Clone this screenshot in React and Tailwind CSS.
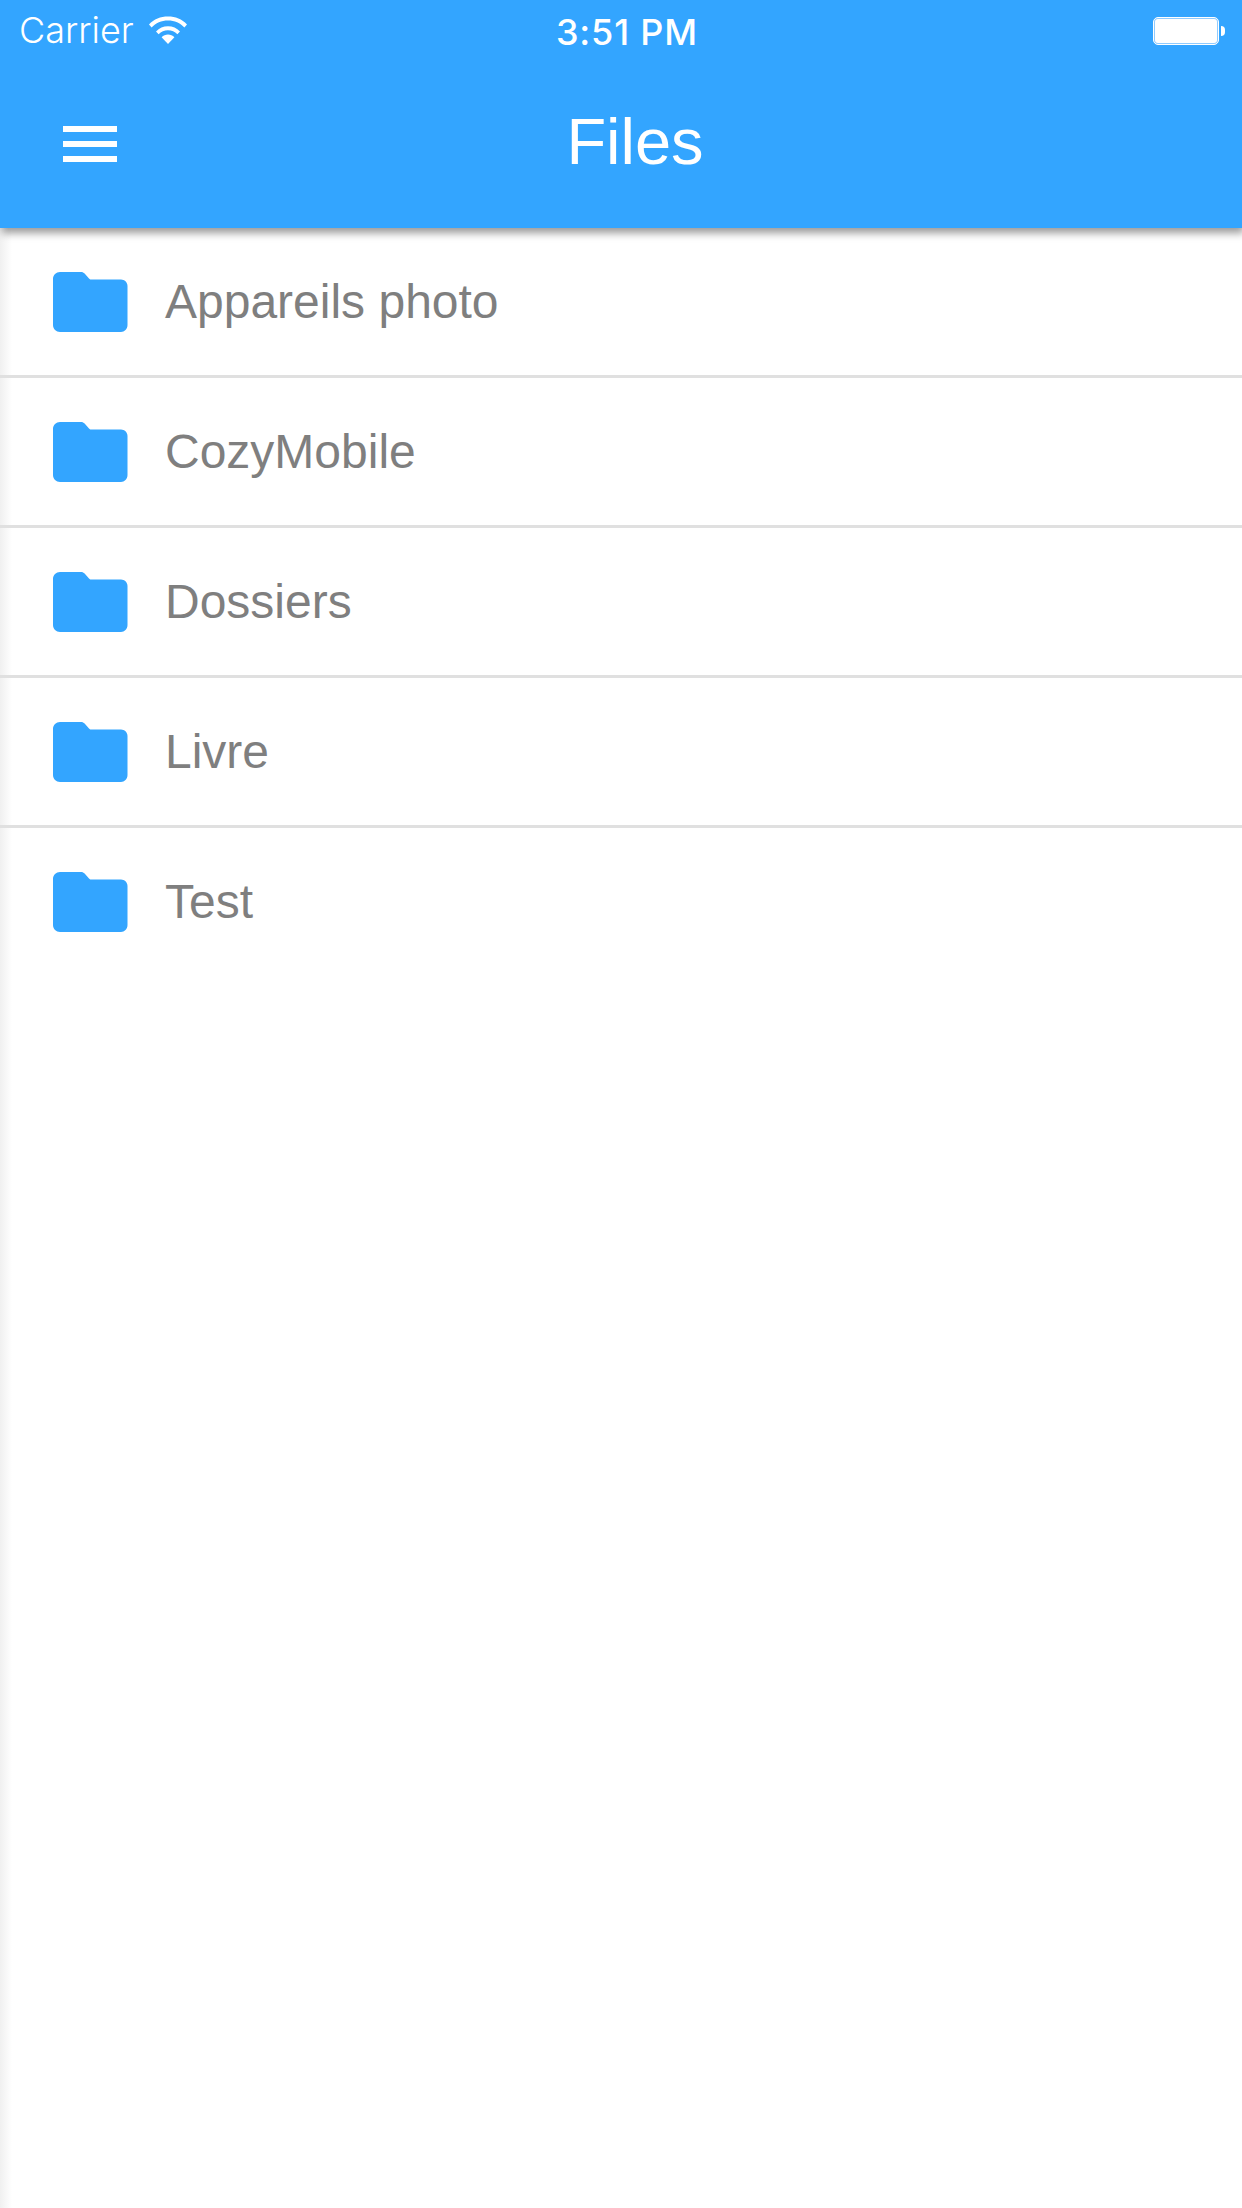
const folders = ["Appareils photo", "CozyMobile", "Dossiers", "Livre", "Test"];

function Wifi() {
  return (
    <svg width="38" height="28" viewBox="0 0 38 28" fill="white">
      <path d="M0 8.5C5 3 11.5 0.5 19 0.5S33 3 38 8.5L35.4 11.4C31.2 6.9 25.6 4.4 19 4.4S6.8 6.9 2.6 11.4Z" />
      <path d="M7 15.5C10.2 12.1 14.3 10.2 19 10.2S27.8 12.1 31 15.5L28.4 18.3C25.8 15.6 22.7 14.2 19 14.2S12.2 15.6 9.6 18.3Z" />
      <path d="M12.6 21.3C14.4 19.5 16.5 18.6 19 18.6S23.6 19.5 25.4 21.3L19 28Z" />
    </svg>
  );
}

function Battery() {
  return (
    <div className="flex items-center gap-[2px] mt-[1px]">
      <div className="w-[66px] h-[28px] rounded-[5px] border border-white bg-[#8fcbff] p-[1px]">
        <div className="w-full h-full rounded-[3px] bg-white" />
      </div>
      <div className="w-[4px] h-[10px] rounded-r-full bg-white" />
    </div>
  );
}

function Folder() {
  return (
    <svg width="75" height="60" viewBox="0 0 75 60" fill="#33a5ff">
      <path d="M7 0H28C29.6 0 30.6 0.6 31.6 1.6L36 6.4C36.8 7.2 37.6 7.6 39 7.6H68C71.4 7.6 74.5 10.4 74.5 14V53C74.5 56.8 71.4 60 68 60H7C3.2 60 0 56.8 0 53V7C0 3.2 3.2 0 7 0Z" />
    </svg>
  );
}

export default function App() {
  return (
    <div className="w-[1242px] h-[2208px] bg-white overflow-hidden font-['Liberation_Sans',sans-serif] antialiased relative">
      <div className="absolute left-0 top-[228px] bottom-0 w-[12px] bg-gradient-to-r from-[#f0f0f0] to-white" />
      <header className="relative z-10 h-[228px] bg-[#33a5ff] text-white shadow-[2px_5px_8px_rgba(0,0,0,0.4)]">
        <div className="relative flex items-center justify-between h-[60px] pl-[19px] pr-[17px] font-['Inter',sans-serif]">
          <div className="flex items-center gap-[15px]">
            <span className="text-[36px] font-light leading-[60px]">Carrier</span>
            <div><Wifi /></div>
          </div>
          <span className="absolute left-[556px] top-0 text-[36px] font-medium leading-[64px] tracking-[0.8px]">3:51 PM</span>
          <Battery />
        </div>
        <div className="relative flex items-center h-[168px] pl-[63px]">
          <div className="flex flex-col gap-[9px]">
            <div className="w-[54px] h-[6px] bg-white" />
            <div className="w-[54px] h-[6px] bg-white" />
            <div className="w-[54px] h-[6px] bg-white" />
          </div>
          <h1 className="absolute left-[28px] right-0 top-[50px] text-center text-[65px] leading-[64px] font-normal">Files</h1>
        </div>
      </header>
      <ul className="relative">
        {folders.map((name, i) => (
          <li
            key={name}
            className={`flex items-center h-[150px] pl-[53px] border-b-[3px] ${i < folders.length - 1 ? "border-[#e0e0e0]" : "border-transparent"}`}
          >
            <div className="mt-[1px]"><Folder /></div>
            <span className="ml-[37px] text-[48px] text-[#7f7f7f] mt-[1px]">{name}</span>
          </li>
        ))}
      </ul>
    </div>
  );
}
